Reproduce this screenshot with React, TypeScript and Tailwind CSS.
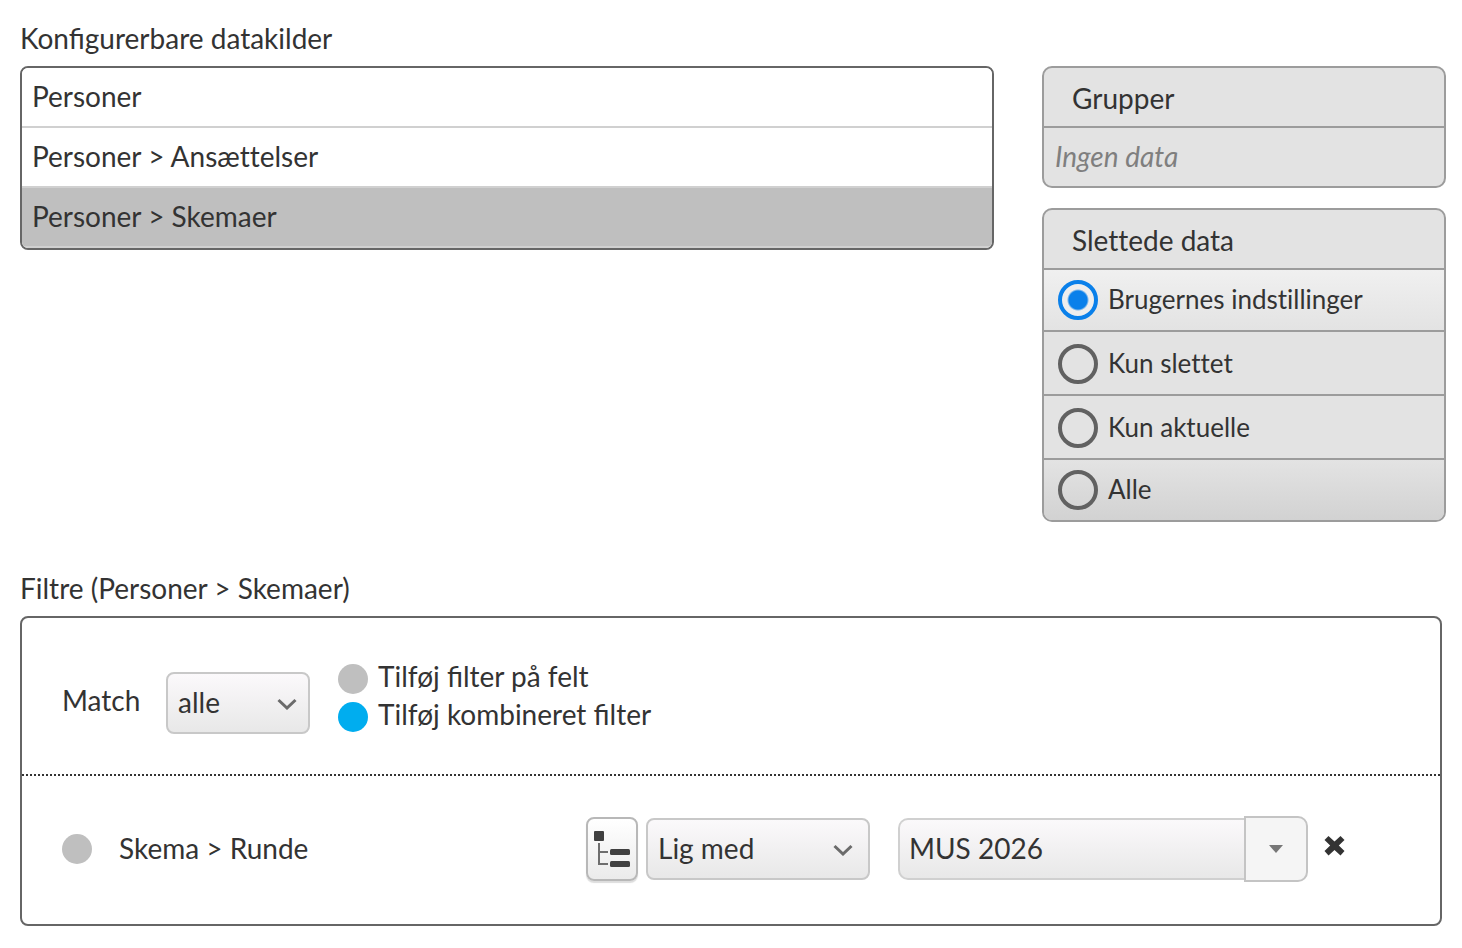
import { useState } from "react";

const sources = ["Personer", "Personer > Ansættelser", "Personer > Skemaer"];

const deletedOptions = [
  { id: "user", label: "Brugernes indstillinger", row: "h-[60px] bg-linear-to-b from-[#f0f0f0] to-[#e3e3e3]" },
  { id: "deleted", label: "Kun slettet", row: "h-16 border-t-2 pt-0.5" },
  { id: "current", label: "Kun aktuelle", row: "h-16 border-t-2 pt-0.5" },
  { id: "all", label: "Alle", row: "h-[62px] border-t-2 bg-linear-to-b from-[#e3e3e3] to-[#d2d2d2]" },
];

function Chevron({ position }: { position: string }) {
  return (
    <svg
      viewBox="0 0 20 12"
      className={`pointer-events-none absolute top-[26px] h-3 w-5 ${position}`}
      fill="none"
      stroke="#6b6b6b"
      strokeWidth="3"
    >
      <path d="M1.500 2 10 10 18.500 2" />
    </svg>
  );
}

type SelectProps = { label: string; options: string[]; width: string; chevron: string };

function Select({ label, options, width, chevron }: SelectProps) {
  return (
    <div className={`relative shrink-0 ${width}`}>
      <select
        aria-label={label}
        className="block h-[62px] w-full appearance-none rounded-lg border-2 border-[#c8c8c8] bg-linear-to-b from-[#fbf9fb] to-[#e8e8e8] pb-0.5 pl-[10px] pr-10"
      >
        {options.map((option) => (
          <option key={option}>{option}</option>
        ))}
      </select>
      <Chevron position={chevron} />
    </div>
  );
}

function TreeIcon() {
  return (
    <svg viewBox="0 0 36 36" className="size-9" fill="#404040">
      <rect x="0" y="0" width="10" height="10" rx="1" />
      <path d="M5 12v21h9M5 21h9" fill="none" stroke="#6e6e6e" strokeWidth="2" />
      <rect x="16" y="18" width="20" height="6" rx="1.500" />
      <rect x="16" y="30" width="20" height="6" rx="1.500" />
    </svg>
  );
}

export default function App() {
  const [selected, setSelected] = useState("Personer > Skemaer");
  const [deleted, setDeleted] = useState("user");

  return (
    <main className="bg-white pb-[22px] pl-5 pr-4 pt-[18px] font-['Lato',sans-serif] text-[28px] leading-10 text-[#333]">
      <h2 className="mb-2">Konfigurerbare datakilder</h2>

      <div className="flex items-start gap-12 [font-variant-ligatures:none]">
        {/* Data sources */}
        <ul className="flex-1 overflow-hidden rounded-lg border-2 border-[#666]">
          {sources.map((source) => (
            <li key={source} className="border-b-2 border-[#d0d0d0]">
              <button
                type="button"
                onClick={() => setSelected(source)}
                className={`flex h-[58px] w-full items-center px-[10px] pb-0.5 ${
                  selected === source ? "bg-[#bfbfbf]" : "bg-white"
                }`}
              >
                {source}
              </button>
            </li>
          ))}
        </ul>

        <aside className="flex w-[404px] flex-col gap-5">
          {/* Groups */}
          <section className="overflow-hidden rounded-[10px] border-2 border-[#9c9c9c] bg-[#e3e3e3]">
            <h3 className="flex h-[58px] items-center px-7 pt-0.5">Grupper</h3>
            <p className="flex h-[60px] items-center border-t-2 border-[#9c9c9c] px-[11px] pb-0.5 italic text-[#7f7f7f]">
              Ingen data
            </p>
          </section>

          {/* Deleted data */}
          <section className="overflow-hidden rounded-[10px] border-2 border-[#9c9c9c] bg-[#e3e3e3]">
            <h3 className="flex h-[60px] items-center border-b-2 border-[#9c9c9c] px-7 pt-0.5">Slettede data</h3>
            {deletedOptions.map(({ id, label, row }) => (
              <label
                key={id}
                className={`flex items-center gap-[10px] border-[#9c9c9c] px-[14px] text-[26px] ${row}`}
              >
                <input
                  type="radio"
                  name="deleted"
                  checked={deleted === id}
                  onChange={() => setDeleted(id)}
                  className="size-10 appearance-none rounded-full border-4 border-[#616161] checked:border-[#0a80ea] checked:bg-[radial-gradient(circle,#0a80ea_9px,#eeeeee_11px)]"
                />
                <span className="pb-0.5">{label}</span>
              </label>
            ))}
          </section>
        </aside>
      </div>

      <h2 className="mb-2 mt-[46px]">Filtre (Personer &gt; Skemaer)</h2>

      <section className="mr-1 rounded-lg border-2 border-[#666]">
        <div className="flex items-center border-b-2 border-dotted border-[#333] pb-7 pl-10 pt-[42px]">
          <span className="w-[104px] pb-1.5">Match</span>
          <Select label="Match" options={["alle", "mindst én"]} width="w-36" chevron="right-[13px]" />
          <div className="flex flex-col pb-[10px] pl-7">
            <button type="button" className="flex h-[38px] items-center gap-[10px]">
              <span className="size-[30px] rounded-full bg-[#bfbfbf]" />
              <span className="pb-1.5">Tilføj filter på felt</span>
            </button>
            <button type="button" className="flex h-[38px] items-center gap-[10px]">
              <span className="size-[30px] rounded-full bg-[#00adef]" />
              <span className="pb-1.5">Tilføj kombineret filter</span>
            </button>
          </div>
        </div>

        {/* Filter row */}
        <div className="flex h-[148px] items-center pb-0.5 pl-10 pr-[95px]">
          <span className="size-[30px] rounded-full bg-[#bfbfbf]" />
          <span className="flex-1 pb-0.5 pl-[27px]">Skema &gt; Runde</span>
          <button
            type="button"
            aria-label="Vælg felt"
            className="mr-2 flex h-16 w-[52px] items-center justify-center rounded-lg border-2 border-[#b8b8b8] bg-linear-to-b from-white to-[#ebebeb] shadow-[0_2px_1px_#dddddd]"
          >
            <TreeIcon />
          </button>
          <Select label="Operator" options={["Lig med", "Forskellig fra"]} width="w-56" chevron="right-[17px]" />
          <div className="flex items-center pl-7">
            <input
              type="text"
              aria-label="Værdi"
              defaultValue="MUS 2026"
              className="h-[62px] w-[346px] rounded-l-[10px] border-2 border-r-0 border-[#d0d0d0] bg-linear-to-b from-[#fbf9fb] to-[#e8e8e8] px-[9px] pb-0.5"
            />
            <button
              type="button"
              aria-label="Vis værdier"
              className="flex h-[66px] w-16 items-center justify-center rounded-r-[10px] border-2 border-[#c4c4c4] bg-[#f5f5f5]"
            >
              <svg viewBox="0 0 14 8" className="h-2 w-[14px]" fill="#777">
                <path d="M0 0h14L7 8z" />
              </svg>
            </button>
          </div>
          <button type="button" aria-label="Fjern filter" className="pb-2 pl-4">
            <svg viewBox="0 0 21 21" className="block size-[21px]" fill="#333">
              <path d="M4.500 1 10.500 6.500 16.500 1 20.500 5 14.800 10.500 20.500 16 16.500 20.500 10.500 15 4.500 20.500.5 16 6.200 10.500.5 5z" />
            </svg>
          </button>
        </div>
      </section>
    </main>
  );
}
